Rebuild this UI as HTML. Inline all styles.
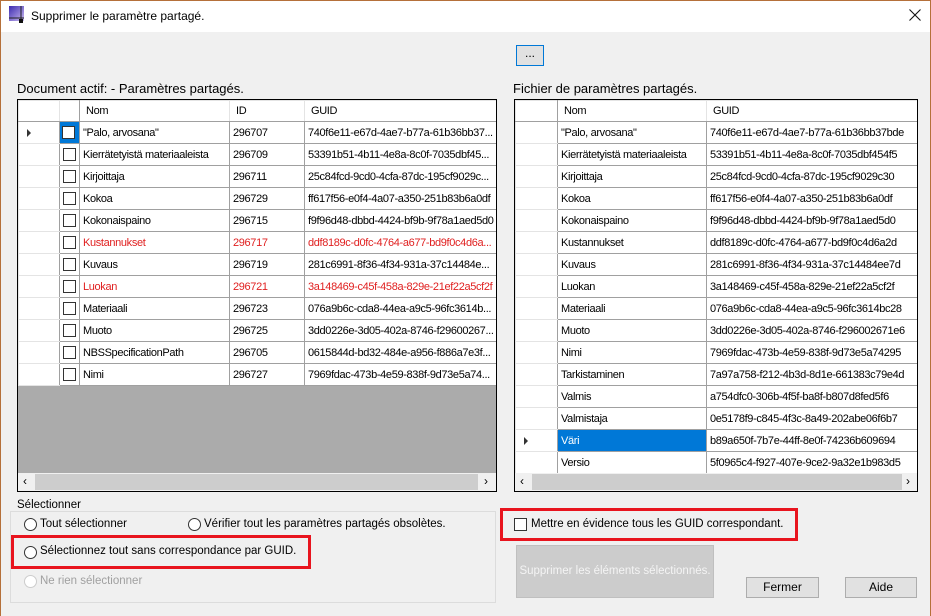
<!DOCTYPE html>
<html><head><meta charset="utf-8"><style>
*{box-sizing:border-box;margin:0;padding:0}
body{width:931px;height:616px;overflow:hidden;background:#f0f0f0;font-family:"Liberation Sans",sans-serif;font-size:12px;color:#000;position:relative}
.abs{position:absolute}
.title{left:0;top:0;width:931px;height:32px;background:#fff;border-left:1px solid #b5703a;border-right:1px solid #b5703a;border-top:1px solid #b5703a}
.grid{position:absolute;border:1px solid #000;background:#ababab;overflow:hidden}
table{border-collapse:collapse;table-layout:fixed;background:#fff}
td{height:22px;border:1px solid #a0a0a0;padding:0 0 0 3px;white-space:nowrap;overflow:hidden;font-size:11px;letter-spacing:-0.35px}
tr.h td{background:#fff;border-color:#e4e4e4;border-bottom:1px solid #a0a0a0;height:21px;padding-left:6px}
td.rh{border-color:#e4e4e4;border-right:1px solid #a0a0a0;background:#fff}
.cb{display:inline-block;width:13px;height:13px;border:1px solid #333;background:#fff;vertical-align:middle;margin-left:3px}
.red{color:#e02020}
.sb{position:absolute;background:#f0f0f0;height:18px}
.sb .th{position:absolute;top:1px;height:16px;background:#cdcdcd}
.btn{position:absolute;background:#e1e1e1;border:1px solid #adadad;text-align:center}
.radio{position:absolute;width:13px;height:13px;border:1px solid #333;border-radius:50%;background:#fff}
.rbox{position:absolute;border:3px solid #e8141e}
.arrow{width:0;height:0;border-top:4px solid transparent;border-bottom:4px solid transparent;border-left:4px solid #333;position:absolute}
</style></head><body>
<div class="abs title"></div>
<div class="abs" style="left:0;top:32px;width:1px;height:584px;background:#b5703a"></div>
<div class="abs" style="left:930px;top:32px;width:1px;height:584px;background:#b5703a"></div>
<svg class="abs" style="left:9px;top:6px" width="16" height="17"><defs><linearGradient id="g" x1="0" y1="0" x2="1" y2="1"><stop offset="0" stop-color="#3c2bb0"/><stop offset="1" stop-color="#c9b8f0"/></linearGradient></defs><rect x="0" y="0" width="15" height="15" fill="url(#g)"/><path d="M12 0V15M0 12H15" stroke="#222" stroke-width="1"/><rect x="10" y="13" width="4" height="4" fill="#111"/></svg>
<div class="abs" style="left:31px;top:9px;font-size:12px">Supprimer le paramètre partagé.</div>
<svg class="abs" style="left:909px;top:9px" width="12" height="12"><path d="M0.5 0.5L11.5 11.5M11.5 0.5L0.5 11.5" stroke="#111" stroke-width="1.1"/></svg>

<div class="btn" style="left:516px;top:45px;width:28px;height:21px;border:1px solid #0078d7;line-height:14px">...</div>

<div class="abs" style="left:17px;top:81px;font-size:13px">Document actif: - Paramètres partagés.</div>
<div class="abs" style="left:513px;top:81px;font-size:13px">Fichier de paramètres partagés.</div>

<div class="grid" style="left:17px;top:99px;width:480px;height:393px">
<table style="width:480px">
<colgroup><col style="width:41px"><col style="width:20px"><col style="width:150px"><col style="width:75px"><col style="width:194px"></colgroup>
<tr class="h"><td></td><td style="border-right:1px solid #a0a0a0"></td><td>Nom</td><td>ID</td><td>GUID</td></tr>
<tr><td class="rh" style="position:relative"><div class="arrow" style="left:8px;top:7px"></div></td><td style="padding:0;background:#0078d7"><span class="cb" style="margin-left:2px"></span></td><td>"Palo, arvosana"</td><td>296707</td><td>740f6e11-e67d-4ae7-b77a-61b36bb37...</td></tr>
<tr><td class="rh"></td><td style="padding:0"><span class="cb"></span></td><td>Kierrätetyistä materiaaleista</td><td>296709</td><td>53391b51-4b11-4e8a-8c0f-7035dbf45...</td></tr>
<tr><td class="rh"></td><td style="padding:0"><span class="cb"></span></td><td>Kirjoittaja</td><td>296711</td><td>25c84fcd-9cd0-4cfa-87dc-195cf9029c...</td></tr>
<tr><td class="rh"></td><td style="padding:0"><span class="cb"></span></td><td>Kokoa</td><td>296729</td><td>ff617f56-e0f4-4a07-a350-251b83b6a0df</td></tr>
<tr><td class="rh"></td><td style="padding:0"><span class="cb"></span></td><td>Kokonaispaino</td><td>296715</td><td>f9f96d48-dbbd-4424-bf9b-9f78a1aed5d0</td></tr>
<tr class="red"><td class="rh"></td><td style="padding:0"><span class="cb"></span></td><td>Kustannukset</td><td>296717</td><td>ddf8189c-d0fc-4764-a677-bd9f0c4d6a...</td></tr>
<tr><td class="rh"></td><td style="padding:0"><span class="cb"></span></td><td>Kuvaus</td><td>296719</td><td>281c6991-8f36-4f34-931a-37c14484e...</td></tr>
<tr class="red"><td class="rh"></td><td style="padding:0"><span class="cb"></span></td><td>Luokan</td><td>296721</td><td>3a148469-c45f-458a-829e-21ef22a5cf2f</td></tr>
<tr><td class="rh"></td><td style="padding:0"><span class="cb"></span></td><td>Materiaali</td><td>296723</td><td>076a9b6c-cda8-44ea-a9c5-96fc3614b...</td></tr>
<tr><td class="rh"></td><td style="padding:0"><span class="cb"></span></td><td>Muoto</td><td>296725</td><td>3dd0226e-3d05-402a-8746-f29600267...</td></tr>
<tr><td class="rh"></td><td style="padding:0"><span class="cb"></span></td><td>NBSSpecificationPath</td><td>296705</td><td>0615844d-bd32-484e-a956-f886a7e3f...</td></tr>
<tr><td class="rh"></td><td style="padding:0"><span class="cb"></span></td><td>Nimi</td><td>296727</td><td>7969fdac-473b-4e59-838f-9d73e5a74...</td></tr>
</table>
<div class="sb" style="left:0;top:373px;width:478px"><div class="th" style="left:17px;width:443px"></div><span class="abs" style="left:5px;top:1px;font-size:12px">‹</span><span class="abs" style="left:466px;top:1px;font-size:12px">›</span></div>
</div>

<div class="grid" style="left:514px;top:99px;width:404px;height:393px;background:#fff">
<table style="width:402px">
<colgroup><col style="width:42px"><col style="width:149px"><col style="width:211px"></colgroup>
<tr class="h"><td style="border-right:1px solid #a0a0a0"></td><td>Nom</td><td>GUID</td></tr>
<tr><td class="rh"></td><td>"Palo, arvosana"</td><td>740f6e11-e67d-4ae7-b77a-61b36bb37bde</td></tr>
<tr><td class="rh"></td><td>Kierrätetyistä materiaaleista</td><td>53391b51-4b11-4e8a-8c0f-7035dbf454f5</td></tr>
<tr><td class="rh"></td><td>Kirjoittaja</td><td>25c84fcd-9cd0-4cfa-87dc-195cf9029c30</td></tr>
<tr><td class="rh"></td><td>Kokoa</td><td>ff617f56-e0f4-4a07-a350-251b83b6a0df</td></tr>
<tr><td class="rh"></td><td>Kokonaispaino</td><td>f9f96d48-dbbd-4424-bf9b-9f78a1aed5d0</td></tr>
<tr><td class="rh"></td><td>Kustannukset</td><td>ddf8189c-d0fc-4764-a677-bd9f0c4d6a2d</td></tr>
<tr><td class="rh"></td><td>Kuvaus</td><td>281c6991-8f36-4f34-931a-37c14484ee7d</td></tr>
<tr><td class="rh"></td><td>Luokan</td><td>3a148469-c45f-458a-829e-21ef22a5cf2f</td></tr>
<tr><td class="rh"></td><td>Materiaali</td><td>076a9b6c-cda8-44ea-a9c5-96fc3614bc28</td></tr>
<tr><td class="rh"></td><td>Muoto</td><td>3dd0226e-3d05-402a-8746-f296002671e6</td></tr>
<tr><td class="rh"></td><td>Nimi</td><td>7969fdac-473b-4e59-838f-9d73e5a74295</td></tr>
<tr><td class="rh"></td><td>Tarkistaminen</td><td>7a97a758-f212-4b3d-8d1e-661383c79e4d</td></tr>
<tr><td class="rh"></td><td>Valmis</td><td>a754dfc0-306b-4f5f-ba8f-b807d8fed5f6</td></tr>
<tr><td class="rh"></td><td>Valmistaja</td><td>0e5178f9-c845-4f3c-8a49-202abe06f6b7</td></tr>
<tr><td class="rh" style="position:relative"><div class="arrow" style="left:8px;top:7px"></div></td><td style="background:#0078d7;color:#fff">Väri</td><td>b89a650f-7b7e-44ff-8e0f-74236b609694</td></tr>
<tr><td class="rh"></td><td>Versio</td><td>5f0965c4-f927-407e-9ce2-9a32e1b983d5</td></tr>
</table>
<div class="sb" style="left:0;top:373px;width:402px"><div class="th" style="left:17px;width:370px"></div><span class="abs" style="left:5px;top:1px">‹</span><span class="abs" style="left:391px;top:1px">›</span></div>
</div>

<div class="abs" style="left:10px;top:511px;width:486px;height:92px;border:1px solid #dcdcdc"></div>
<div class="abs" style="left:14px;top:499px;background:#f0f0f0;padding:0 3px;font-size:11.5px">Sélectionner</div>
<div class="radio" style="left:24px;top:518px"></div><div class="abs" style="left:40px;top:518px;font-size:11.5px">Tout sélectionner</div>
<div class="radio" style="left:188px;top:518px"></div><div class="abs" style="left:204px;top:518px;font-size:11.5px">Vérifier tout les paramètres partagés obsolètes.</div>
<div class="rbox" style="left:11px;top:535px;width:300px;height:34px"></div>
<div class="radio" style="left:24px;top:546px"></div><div class="abs" style="left:40px;top:545px;font-size:11.5px">Sélectionnez tout sans correspondance par GUID.</div>
<div class="radio" style="left:24px;top:575px;border-color:#ccc"></div><div class="abs" style="left:40px;top:575px;font-size:11.5px;color:#a0a0a0">Ne rien sélectionner</div>

<div class="rbox" style="left:500px;top:508px;width:298px;height:33px"></div>
<div class="abs" style="left:514px;top:518px;width:13px;height:13px;border:1px solid #333;background:#fff"></div>
<div class="abs" style="left:531px;top:518px;font-size:11.5px">Mettre en évidence tous les GUID correspondant.</div>

<div class="btn" style="left:516px;top:545px;width:198px;height:53px;background:#cccccc;border-color:#bfbfbf;color:#f4f4f4;line-height:51px;font-size:11.5px">Supprimer les éléments sélectionnés.</div>
<div class="btn" style="left:746px;top:577px;width:73px;height:21px;line-height:19px">Fermer</div>
<div class="btn" style="left:845px;top:577px;width:72px;height:21px;line-height:19px">Aide</div>
</body></html>
